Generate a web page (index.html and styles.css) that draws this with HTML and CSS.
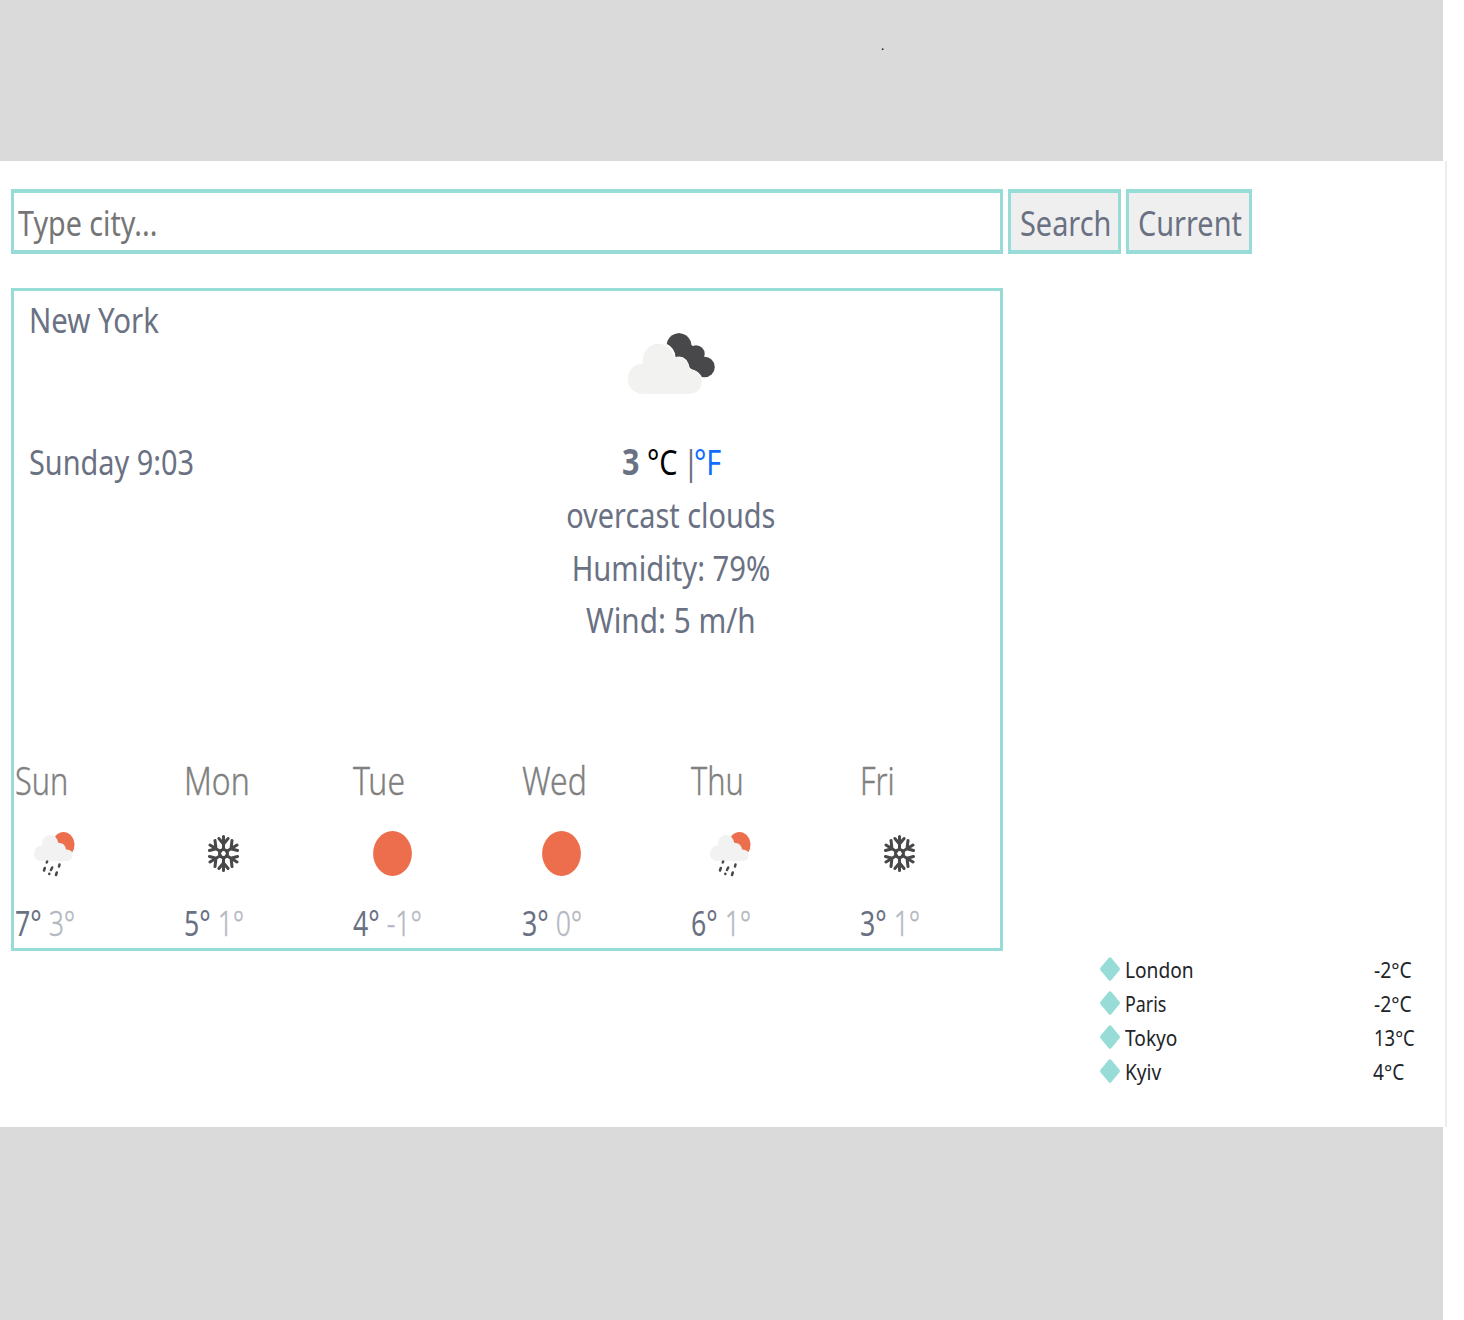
FILE: index.html
```
<!DOCTYPE html>
<html lang="en">
<head>
<meta charset="utf-8">
<title>Weather</title>
<link rel="stylesheet" href="styles.css">
</head>
<body>
<svg width="0" height="0" class="defs">
  <symbol id="shower" viewBox="0 0 41 47" preserveAspectRatio="none">
    <path d="M20.500 7.500A10.700 12.500 0 1 1 38.500 22L30 20Z" fill="#ec6e4c"/>
    <path d="M7.500 31C2 31 0 27 0 24Q.5 16 8 15.500Q8 5 16 5Q23 5 24 13Q31 12 32 19.500Q38.500 19 38.500 25.500Q38 31 32 31Z" fill="#f2f2f2"/>
    <path d="M13.200 31.500l-.5 1M10.800 38l-.8 2.500M18.200 37.500l-1.200 2.500M25.500 34.500l-.5 2M22.800 42.500l-.8 2.500M15.300 43.800v.3" stroke="#48484a" stroke-width="2.500" stroke-linecap="round"/>
  </symbol>
  <symbol id="snow" viewBox="-15.500 -18.500 31 37" preserveAspectRatio="none">
    <g fill="none" stroke="#48484a" stroke-width="3" stroke-linecap="round">
      <circle r="4"/>
      <path d="M0-4V-17M0-9.500L-4.600-15M0-9.500L4.600-15M0 4V17M0 9.500L-4.600 15M0 9.500L4.600 15"/>
      <path d="M3-2L13.500-8.500M7.500-4.800L8.500-13M7.500-4.800L14-3M3 2L13.500 8.500M7.500 4.800L8.500 13M7.500 4.800L14 3"/>
      <path d="M-3-2L-13.500-8.500M-7.500-4.800L-8.500-13M-7.500-4.800L-14-3M-3 2L-13.500 8.500M-7.500 4.800L-8.500 13M-7.500 4.800L-14 3"/>
    </g>
  </symbol>
  <symbol id="sun" viewBox="0 0 39 45"><ellipse cx="19.500" cy="22.500" rx="19.400" ry="22.400" fill="#ec6e4c"/></symbol>
</svg>
<header class="band band-top">.</header>
<main class="app">
  <form class="search">
    <div class="box field"><span class="t w-type">Type city...</span></div>
    <div class="box btn btn-search"><span class="t">Search</span></div>
    <div class="box btn btn-current"><span class="t">Current</span></div>
  </form>
  <section class="card">
    <div class="now">
      <div class="place"><span class="t w-city">New York</span><span class="t">Sunday 9:03</span></div>
      <div class="weather">
        <svg class="cloud" viewBox="0 0 90 64">
          <g fill="#48484a"><circle cx="53" cy="13.500" r="12.300"/><circle cx="70" cy="22" r="8.700"/><circle cx="78.500" cy="35" r="10.300"/><path d="M53 1L77 24L76 45L40 18Z"/></g>
          <path d="M41 12Q49 16 49.500 25Q61 22 64 37Q73 38 77 47L50 50L36 22Z" fill="#fff"/>
          <path d="M17 62A15 15 0 0 1 17 31.500A15.600 16.500 0 0 1 48 25.500A11.800 11.800 0 0 1 63 37.500A12.200 12.200 0 0 1 64 62Z" fill="#f2f2f0"/>
        </svg>
        <div class="temp"><b class="t">3</b><span class="t c">°C</span><span class="t bar">|</span><span class="t f">°F</span></div>
        <div class="line"><span class="t">overcast clouds</span></div>
        <div class="line"><span class="t w-hum">Humidity: 79%</span></div>
        <div class="line"><span class="t w-wind">Wind: 5 m/h</span></div>
      </div>
    </div>
    <div class="forecast">
      <div class="day"><span class="t name">Sun</span><svg class="shower"><use href="#shower"/></svg><div class="t range">7° <i>3°</i></div></div>
      <div class="day"><span class="t name w-mon">Mon</span><svg class="snow"><use href="#snow"/></svg><div class="t range">5° <i>1°</i></div></div>
      <div class="day"><span class="t name w-mon">Tue</span><svg class="sun"><use href="#sun"/></svg><div class="t range">4° <i>-1°</i></div></div>
      <div class="day"><span class="t name w-mon">Wed</span><svg class="sun"><use href="#sun"/></svg><div class="t range">3° <i>0°</i></div></div>
      <div class="day"><span class="t name">Thu</span><svg class="shower"><use href="#shower"/></svg><div class="t range">6° <i>1°</i></div></div>
      <div class="day"><span class="t name">Fri</span><svg class="snow"><use href="#snow"/></svg><div class="t range">3° <i>1°</i></div></div>
    </div>
  </section>
  <ul class="cities">
    <li><svg class="gem" viewBox="0 0 20 24"><path d="M8.800.8Q10-.4 11.200.8L19.300 10.500Q20.500 12 19.300 13.500L11.200 23.200Q10 24.400 8.800 23.200L.7 13.500Q-.5 12 .7 10.500Z"/></svg><span class="t town">London</span><span class="t deg">-2°C</span></li>
    <li><svg class="gem" viewBox="0 0 20 24"><path d="M8.800.8Q10-.4 11.200.8L19.300 10.500Q20.500 12 19.300 13.500L11.200 23.200Q10 24.400 8.800 23.200L.7 13.500Q-.5 12 .7 10.500Z"/></svg><span class="t town w-paris">Paris</span><span class="t deg">-2°C</span></li>
    <li><svg class="gem" viewBox="0 0 20 24"><path d="M8.800.8Q10-.4 11.200.8L19.300 10.500Q20.500 12 19.300 13.500L11.200 23.200Q10 24.400 8.800 23.200L.7 13.500Q-.5 12 .7 10.500Z"/></svg><span class="t town">Tokyo</span><span class="t deg w-tokyo">13°C</span></li>
    <li><svg class="gem" viewBox="0 0 20 24"><path d="M8.800.8Q10-.4 11.200.8L19.300 10.500Q20.500 12 19.300 13.500L11.200 23.200Q10 24.400 8.800 23.200L.7 13.500Q-.5 12 .7 10.500Z"/></svg><span class="t town">Kyiv</span><span class="t deg w-kyiv">4°C</span></li>
  </ul>
</main>
<footer class="band band-bottom"></footer>
</body>
</html>
```
FILE: styles.css
```
* { box-sizing: border-box; }
body { margin: 0; height: 1320px; background: #fff; color: #6a7183; font: 370 35px/52.7px "Noto Sans", "Open Sans", sans-serif; overflow: hidden; }
.defs { display: block; height: 0; }
.band { width: 1443px; background: #dadada; }
.band-top { height: 161px; padding: 36px 0 0 881px; color: #000; font-size: 12px; line-height: 20px; }
.band-bottom { height: 193px; }
.app { width: 1447px; height: 966px; padding: 28px 0 0 11px; border-right: 2px solid #f0ebed; }
.t { display: inline-block; white-space: pre; transform: scaleX(.825); transform-origin: left; }
.search { display: flex; gap: 5px; height: 65px; }
.box { height: 65px; border: 3px solid #97dcd6; border-width: 4px 3px; padding-top: 4px; }
.field { width: 992px; padding-left: 4px; color: #757575; }
.w-type { transform: scaleX(.82); }
.btn { width: 113px; background: #efefef; padding-left: 9px; }
.btn-current { width: 126px; }
.card { width: 992px; height: 663px; margin-top: 34px; border: 3px solid #97dcd6; }
.now { display: flex; height: 464px; }
.place { width: 410px; padding: 3px 0 0 15px; display: flex; flex-direction: column; gap: 89.300px; align-items: flex-start; }
.w-city { transform: scaleX(.84); }
.weather { width: 493px; text-align: center; }
.line .t { transform-origin: center; }
.line .w-hum { transform: scaleX(.835); }
.line .w-wind { transform: scaleX(.85); }
.cloud { display: block; width: 90px; height: 64px; margin: 41px auto 40.300px; }
.temp { display: flex; height: 52.700px; padding-left: 193.500px; }
.temp b { width: 29.500px; font-weight: 700; transform: scaleX(.87); }
.c { width: 36px; color: #000; }
.bar { width: 10.500px; }
.f { color: #0d6efd; }
.line { height: 52.700px; }
.forecast { display: grid; grid-template-columns: repeat(6, 169.100px); }
.day { display: flex; flex-direction: column; align-items: flex-start; height: 192px; padding-left: 1px; }
.name { height: 52px; line-height: 50px; margin-bottom: 21px; font-size: 38px; font-weight: 300; color: #808080; -webkit-text-stroke: .4px currentColor; transform: scaleX(.805); }
.w-mon { transform: scaleX(.84); }
.day svg { display: block; flex: none; }
.shower { width: 41px; height: 47px; margin: 3px 0 18px 19px; }
.snow { width: 31px; height: 37px; margin: 8px 0 23px 24px; }
.sun { width: 39px; height: 45px; margin: 4px 0 19px 20px; }
.range { height: 52px; line-height: 56px; font-size: 34px; transform: scaleX(.785); }
.range i { font-style: normal; font-weight: 300; color: #b4b8c1; -webkit-text-stroke: .4px currentColor; }
.cities { list-style: none; margin: 1px 0 0 1089px; padding: 0; font-size: 22px; color: #212529; }
.cities li { display: flex; height: 34px; line-height: 34px; align-items: center; }
.gem { width: 20px; height: 24px; fill: #97dcd6; margin-right: 5px; }
.town { width: 248px; transform: scaleX(.87); }
.w-paris { transform: scaleX(.81); }
.deg { transform: translateX(1px) scaleX(.88); }
.w-tokyo { transform: translateX(1px) scaleX(.84); }
.w-kyiv { transform: scaleX(.87); }
```
